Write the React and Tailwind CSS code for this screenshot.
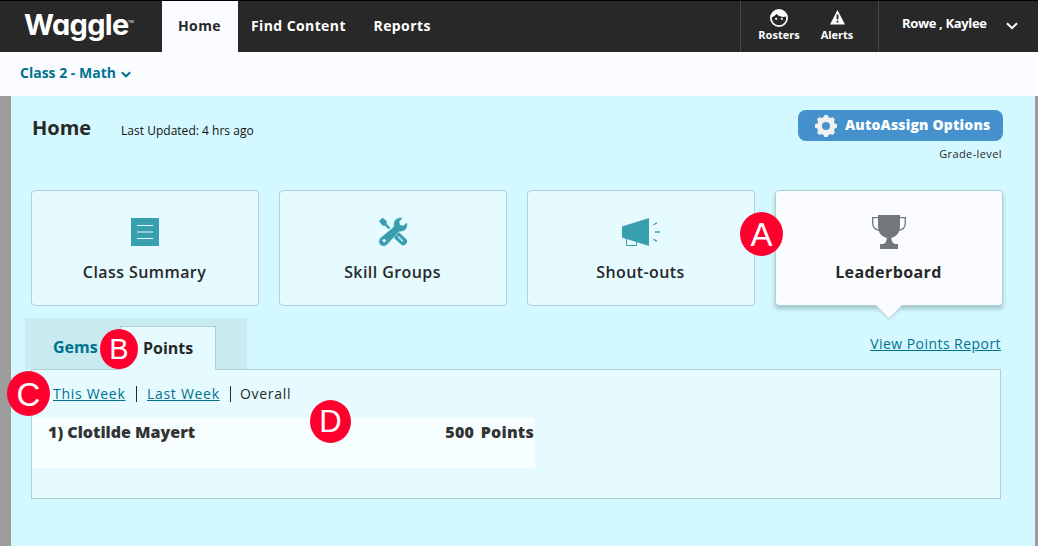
import { useState } from 'react';

const cards = [
  { id: 'summary', label: 'Class Summary', Icon: SummaryIcon },
  { id: 'skills', label: 'Skill Groups', Icon: ToolsIcon },
  { id: 'shouts', label: 'Shout-outs', Icon: MegaphoneIcon },
  { id: 'leaderboard', label: 'Leaderboard', Icon: TrophyIcon }
];

const students = [
  { id: 1, name: 'Clotilde Mayert', points: 500 }
];

function SummaryIcon() {
  return (
    <svg width="28" height="28" viewBox="0 0 28 28" className="mt-[27px]">
      <rect width="28" height="28" rx="0.5" fill="#379fad" />
      <path d="M6 7.5h16M6 14h16M6 20.5h16" stroke="#e6fbff" strokeWidth="1.1" />
    </svg>
  );
}

function ToolsIcon() {
  return (
    <svg width="30" height="30" viewBox="0 0 30 30" className="mt-[26px]">
      {/* screwdriver */}
      <path d="M1 4L4.6 0.8L8.7 4.1V7L12.3 10.7L10.7 12.3L7 8.8L4.2 8.6Z" fill="#379fad" />
      <path d="M20 19.5L25.3 24.5" stroke="#379fad" strokeWidth="7.4" strokeLinecap="round" />
      <path d="M15.4 19.8L20.2 15.1L23 17.6L18 22.5Z" fill="#379fad" />
      <path d="M20.5 20L24.3 23.7" stroke="#e6fbff" strokeWidth="1.7" strokeLinecap="round" />
      <path d="M20.5 20L24.3 23.7" stroke="#379fad" strokeWidth="0.6" />
      {/* wrench */}
      <path
        d="M25 1C19.7 -.6 15 3 15.600 8.2C15.700 9.2 15.500 9.7 15 10.200L2.4 20.800C-2.200 25.7 3.7 32.200 9 27.9L20.400 15.500C20.900 14.8 21.5 14.600 22.200 14.700C27 14.8 30.500 10.8 29 5.2L25.300 8.6L22.300 7.700L21.500 4.600Z"
        fill="#379fad" stroke="#e6fbff" strokeWidth="0.6"
      />
      <circle cx="6.2" cy="23.6" r="1.6" fill="#e6fbff" />
    </svg>
  );
}

function MegaphoneIcon() {
  return (
    <svg width="38" height="29" viewBox="0 0 38 29" className="mt-[27px]">
      <path d="M4.5 19V27.5H14.5V22" fill="none" stroke="#379fad" strokeWidth="1" />
      <path d="M0 8.6L27 0V28L0 19.5Z" fill="#379fad" />
      <path d="M31.5 6.8L35 4.7M33 14H38M31.5 21.2L35 23.4" stroke="#379fad" strokeWidth="1.3" />
    </svg>
  );
}

function TrophyIcon() {
  return (
    <svg width="34" height="34" viewBox="0 0 34 34" className="mt-6">
      <path d="M7 2.6H.7V8C.7 12.5 3.3 15 8 15.3M27 2.6H33.3V8C33.3 12.5 30.7 15 26 15.3" fill="none" stroke="#71777a" strokeWidth="1.3" />
      <path d="M6 0H28V11C28 18.5 24 21.5 19.4 23C19.4 26 20.5 28 23 29H26V34H8V29H11.5C13.7 28 14.8 26 14.8 23C10 21.5 6 18.5 6 11Z" fill="#71777a" />
    </svg>
  );
}

function FaceIcon() {
  return (
    <svg width="18" height="18" viewBox="0 0 24 24" fill="#fff">
      <path d="M8.2 11.6a1.5 1.5 0 1 0 0 3 1.5 1.5 0 0 0 0-3zm7.6 0a1.5 1.5 0 1 0 0 3 1.5 1.5 0 0 0 0-3zM12 0a12 12 0 1 0 0 24 12 12 0 0 0 0-24zm0 21.6c-5.3 0-9.6-4.3-9.6-9.6 0-.3 0-.7.05-1a12 12 0 0 0 6.2-4.4A12 12 0 0 0 21 10c.4 1 .6 1.3 .6 2 0 5.3-4.3 9.6-9.6 9.6z" />
    </svg>
  );
}

function AlertIcon() {
  return (
    <svg width="15" height="15" viewBox="0 0 15 15">
      <path d="M7.5 0L15 14.5H0Z" fill="#fff" />
      <path d="M7.5 4.5V9.5M7.5 10.7V12.5" stroke="#282828" strokeWidth="1.8" />
    </svg>
  );
}

function GearIcon() {
  return (
    <svg width="22" height="22" viewBox="-11 -11 22 22">
      {[0, 45, 90, 135].map((angle) => (
        <rect key={angle} x="-2.2" y="-11" width="4.4" height="22" rx="1.3" fill="#f1f1f1" transform={`rotate(${angle})`} />
      ))}
      <circle r="6.8" fill="none" stroke="#f1f1f1" strokeWidth="4.8" />
      <circle r="4" fill="#4491ce" />
    </svg>
  );
}

function Chevron({ className }) {
  return (
    <svg viewBox="0 0 12 8" className={className} fill="none" stroke="currentColor">
      <path d="M1 1.2L6 6.2L11 1.2" />
    </svg>
  );
}

function Marker({ letter, className }) {
  return (
    <span className={`absolute z-10 flex items-center justify-center rounded-[50%] bg-[#ff002e] font-['Liberation_Sans'] text-white ${className}`}>
      {letter}
    </span>
  );
}

export default function App() {
  const [activeCard] = useState('leaderboard');

  return (
    <div className="relative flex h-[546px] w-[1038px] flex-col overflow-hidden bg-[#fbfcff] font-['Open_Sans',sans-serif] text-[#282828]">
      {/* Top bar */}
      <header className="flex h-[52px] shrink-0 border-t border-black bg-[#282828] font-bold text-white">
        <div className="flex w-[162px] items-start pl-6 pt-1.5">
          <span className="w-[104px] font-['Inter'] text-[29px] leading-[36px] font-bold tracking-[-0.7px] [font-feature-settings:'cv11']">Waggle</span>
          <span className="mt-3 text-[4px] leading-[5px] font-normal">TM</span>
        </div>
        <nav className="flex text-sm leading-5 tracking-[0.4px]">
          <a className="w-[76px] bg-[#fbfcff] pt-[15px] pl-4 text-[#282828]">Home</a>
          <a className="w-[123px] pt-[15px] pl-[13px] whitespace-nowrap">Find Content</a>
          <a className="pt-[15px] pl-[12.5px]">Reports</a>
        </nav>
        <div className="ml-auto flex w-[138px] border-l border-[#484848] text-[11px] leading-4">
          <a className="ml-[17px] flex w-[42px] flex-col items-center pt-2">
            <FaceIcon />
            <span>Rosters</span>
          </a>
          <a className="ml-5 flex w-[34px] flex-col items-center pt-2">
            <span className="h-[18px] pt-px"><AlertIcon /></span>
            <span>Alerts</span>
          </a>
        </div>
        <div className="flex w-40 border-l border-[#484848] pt-3 pl-[23px] text-[13px] leading-5">
          <span className="w-[104px] tracking-[-0.35px] whitespace-nowrap">Rowe , Kaylee</span>
          <Chevron className="mt-[9px] h-2 w-3 stroke-2" />
        </div>
      </header>

      <div className="flex h-11 shrink-0 pt-[11px] pl-5 text-sm leading-5 font-bold text-[#00718f]">
        Class 2 - Math
        <Chevron className="mt-2 ml-[5px] h-[7px] w-2.5 stroke-[2.5]" />
      </div>

      <main className="flex-1 border-r-[3px] border-l-[11px] border-[#9c9c9c] bg-[#d4f8ff]">
        {/* Page title */}
        <div className="flex h-[94px] pt-3.5 pr-8 pl-[21px]">
          <h1 className="w-[89px] text-xl leading-9 font-bold">Home</h1>
          <p className="pt-[11px] text-xs leading-5 tracking-[0.02px] text-[#111]">Last Updated: 4 hrs ago</p>
          <div className="ml-auto flex flex-col items-end">
            <button className="flex h-[31px] w-[205px] items-center rounded-lg bg-[#4491ce] pl-[17px] text-sm font-extrabold tracking-[0.17px] whitespace-nowrap text-white">
              <GearIcon />
              <span className="ml-2 pb-0.5">AutoAssign Options</span>
            </button>
            <span className="mt-1 mr-px text-[11px] leading-[18px] tracking-[0.4px]">Grade-level</span>
          </div>
        </div>

        {/* Cards */}
        <div className="flex gap-5 pl-5">
          {cards.map(({ id, label, Icon }) => (
            <div
              key={id}
              className={id === activeCard
                ? 'relative flex h-[116px] w-[228px] flex-col items-center rounded border border-[#b1d0d3] bg-[#fbfcff] font-bold shadow-[0_3px_4px_#9fc5ca]'
                : 'flex h-[116px] w-[228px] flex-col items-center rounded border border-[#b1d0d3] bg-[#e6fbff] font-semibold'}
            >
              <div className="flex h-[69px] items-start"><Icon /></div>
              <span className="mr-px text-base leading-6 tracking-[0.42px]">{label}</span>
              {id === activeCard && (
                <svg width="28" height="16" viewBox="0 0 28 16" className="absolute top-[113px] left-[99px] drop-shadow-[0_2px_1px_#b5d5d9]">
                  <path d="M0 0H28L14 14Z" fill="#fbfcff" />
                </svg>
              )}
            </div>
          ))}
        </div>

        {/* Tabs */}
        <div className="mt-3 flex h-[51px] justify-between pr-[34px] pl-3.5">
          <div className="flex w-[222px] bg-[#c8ebef] text-base leading-6 font-bold">
            <a className="w-[95px] pt-[17px] pl-7 text-[#00718f]">Gems</a>
            <a className="relative z-[1] mt-2 h-11 w-24 border border-b-0 border-[#b1d0d3] bg-[#e6fbff] pt-[9px] pl-[22px]">Points</a>
          </div>
          <a className="pt-4 text-sm leading-5 tracking-[0.45px] text-[#00718f] underline">View Points Report</a>
        </div>

        <section className="ml-5 h-[130px] w-[970px] border border-[#b1d0d3] bg-[#e6fbff]">
          <div className="flex h-12 items-start pt-3.5 pl-[21px] text-sm leading-5 tracking-[0.7px] whitespace-nowrap">
            <a className="w-[83px] text-[#00718f] underline">This Week</a>
            <span className="mt-0.5 h-4 w-[11px] border-l border-[#282828]" />
            <a className="w-[83px] text-[#00718f] underline">Last Week</a>
            <span className="mt-0.5 h-4 w-2.5 border-l border-[#282828]" />
            <span>Overall</span>
          </div>
          {students.map((student, i) => (
            <div key={student.id} className="flex h-[50px] w-[503px] justify-between bg-[#f6feff] pt-0.5 pr-px pl-4 text-base leading-6 font-extrabold text-[#333]">
              <span>{i + 1}) {student.name}</span>
              <span className="tracking-[0.25px] [word-spacing:2px]">{student.points} Points</span>
            </div>
          ))}
        </section>
      </main>

      <Marker letter="A" className="top-[212px] left-[740px] h-11 w-[43px] pt-0.5 text-[33px]" />
      <Marker letter="B" className="top-[329px] left-[100px] h-10 w-[38px] pt-0.5 text-[29px]" />
      <Marker letter="C" className="top-[371px] left-[7px] h-[45px] w-[43px] pt-0.5 text-[33px]" />
      <Marker letter="D" className="top-[400px] left-[310px] h-[43px] w-[41px] pt-0.5 text-[31px]" />
    </div>
  );
}
